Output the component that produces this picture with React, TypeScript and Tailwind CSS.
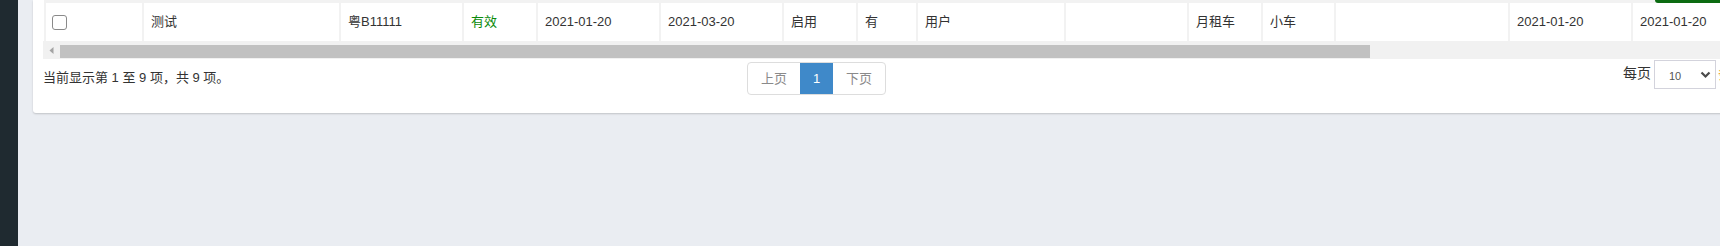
import React from "react";

const FONT = { fontFamily: '"Liberation Sans", "Noto Sans CJK SC", sans-serif' };

type Cell = { w: number; text?: string; green?: boolean; checkbox?: boolean };

const cells: Cell[] = [
  { w: 96, checkbox: true },
  { w: 195, text: "测试" },
  { w: 121, text: "粤B11111" },
  { w: 72, text: "有效", green: true },
  { w: 121, text: "2021-01-20" },
  { w: 121, text: "2021-03-20" },
  { w: 72, text: "启用" },
  { w: 58, text: "有" },
  { w: 146, text: "用户" },
  { w: 121, text: "" },
  { w: 72, text: "月租车" },
  { w: 71, text: "小车" },
  { w: 172, text: "" },
  { w: 121, text: "2021-01-20" },
  { w: 200, text: "2021-01-20" },
];

export default function App() {
  return (
    <div
      className="relative flex w-[1720px] h-[246px] overflow-hidden bg-[#eaedf2] text-[13px] text-[#333]"
      style={FONT}
    >
      <div className="w-[18px] h-full shrink-0 bg-[#1f2a30]" />
      <div className="pl-[15px] shrink-0">
        <div className="w-[1760px] h-[113px] bg-white pl-[10px] rounded-b-[3px] shadow-[0_1px_2px_rgba(0,0,0,0.18)]">
          {/* table row */}
          <div className="ml-[1px] flex gap-[2px] pt-[3px] pl-[2px] bg-[#f2f2f2] overflow-hidden">
            {cells.map((c, i) => (
              <div
                key={i}
                className="h-[38px] shrink-0 bg-white flex items-center pl-[7px] whitespace-nowrap"
                style={{ width: c.w }}
              >
                {c.checkbox ? (
                  <div className="ml-[-1px] w-[15px] h-[15px] border border-[#8a8a8a] rounded-[3px] bg-white" />
                ) : (
                  <span className={c.green ? "text-[#0a8a0a]" : "text-[#333]"}>{c.text}</span>
                )}
              </div>
            ))}
          </div>
          {/* horizontal scrollbar */}
          <div className="flex h-[18px] bg-[#f1f1f1]">
            <div className="w-[17px] h-full flex items-center justify-center shrink-0">
              <svg width="5" height="7" viewBox="0 0 5 7">
                <path d="M4.5 0 L0.5 3.5 L4.5 7 Z" fill="#a3a3a3" />
              </svg>
            </div>
            <div className="w-[1310px] h-[13px] mt-[4px] bg-[#c1c1c1] shrink-0" />
          </div>
          {/* footer */}
          <div className="flex items-start h-[53px]">
            <div className="w-[704px] shrink-0 pt-[10px] leading-[18px] whitespace-nowrap">
              当前显示第 1 至 9 项，共 9 项。
            </div>
            <div className="mt-[3px] flex h-[33px] border border-[#ddd] rounded-[4px] overflow-hidden shrink-0">
              <div className="w-[52px] flex items-center justify-center text-[#8a8a8a]">上页</div>
              <div className="w-[33px] flex items-center justify-center bg-[#3f89c9] text-white">1</div>
              <div className="w-[52px] flex items-center justify-center text-[#8a8a8a]">下页</div>
            </div>
            <div className="ml-[737px] mt-[1px] flex items-center shrink-0">
              <span className="text-[14px] text-[#333] mr-[3px] mt-[-2px] whitespace-nowrap">每页</span>
              <div className="w-[62px] h-[29px] border border-[#d3d3dc] flex items-center justify-between pl-[14px] pr-[4px]">
                <span className="text-[11px] text-[#555] mt-[3px]">10</span>
                <svg width="11" height="8" viewBox="0 0 11 8">
                  <path d="M1.5 1.5 L5.5 5.5 L9.5 1.5" fill="none" stroke="#4a4a4a" strokeWidth="2.2" />
                </svg>
              </div>
              <span className="ml-[2px] text-[14px] text-[#e89a1c]">条</span>
            </div>
          </div>
        </div>
      </div>
      <div className="absolute top-0 left-[1655px] w-[80px] h-[3px] bg-[#0c6b12] rounded-bl-[4px]" />
    </div>
  );
}
